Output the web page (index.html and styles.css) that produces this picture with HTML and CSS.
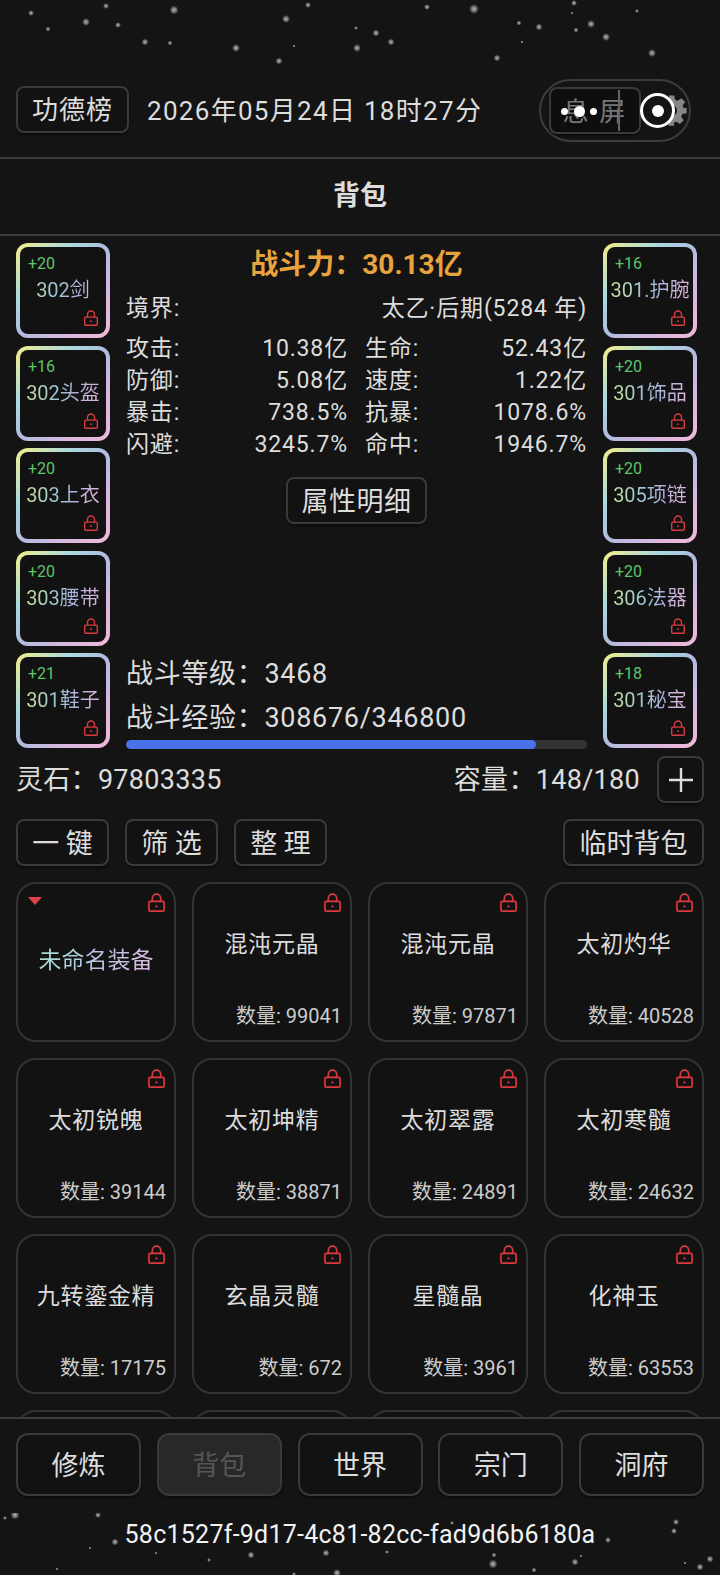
FILE: index.html
```html
<!DOCTYPE html>
<html lang="zh-CN">
<head>
  <meta charset="UTF-8" />
  <meta name="viewport" content="width=device-width, initial-scale=1.0" />
  <title>背包</title>
  <link rel="stylesheet" href="styles.css">
</head>
<body>
  <svg class="defs" aria-hidden="true">
    <defs>
      <radialGradient id="glow">
        <stop offset="0" stop-color="#fff" stop-opacity="0.95" />
        <stop offset="0.45" stop-color="#fff" stop-opacity="0.6" />
        <stop offset="1" stop-color="#fff" stop-opacity="0" />
      </radialGradient>
      <symbol id="lock" viewBox="0 0 16 18">
        <path d="M4 8V5a4 4 0 0 1 8 0v3" fill="none" stroke="currentColor" stroke-width="1.6" />
        <rect x="0.8" y="8" width="14.4" height="9.2" rx="1.2" fill="none" stroke="currentColor" stroke-width="1.6" />
        <circle cx="8" cy="12.6" r="1.1" fill="currentColor" />
      </symbol>
    </defs>
  </svg>

  <div class="page">
    <svg class="stars" viewBox="0 0 720 1575" aria-hidden="true">
      <g fill="url(#glow)">
        <circle cx="31" cy="13" r="3" /><circle cx="86" cy="22" r="4" /><circle cx="106" cy="6" r="3" />
        <circle cx="118" cy="25" r="3" /><circle cx="48" cy="29" r="2.5" /><circle cx="174" cy="10" r="4.5" />
        <circle cx="286" cy="19" r="4" /><circle cx="308" cy="5" r="3" /><circle cx="145" cy="42" r="3.5" />
        <circle cx="170" cy="43" r="2.5" /><circle cx="236" cy="48" r="4" /><circle cx="279" cy="61" r="3.5" />
        <circle cx="294" cy="46" r="1.5" /><circle cx="356" cy="28" r="2" /><circle cx="376" cy="33" r="3.5" />
        <circle cx="391" cy="42" r="3.5" /><circle cx="357" cy="48" r="4" /><circle cx="427" cy="7" r="3" />
        <circle cx="474" cy="9" r="5" /><circle cx="497" cy="58" r="3.5" /><circle cx="519" cy="23" r="2.5" />
        <circle cx="522" cy="42" r="1.5" /><circle cx="539" cy="27" r="3.5" /><circle cx="574" cy="3" r="3" />
        <circle cx="572" cy="13" r="1.5" /><circle cx="576" cy="30" r="2.5" /><circle cx="591" cy="24" r="4" />
        <circle cx="606" cy="37" r="4" /><circle cx="637" cy="11" r="2" /><circle cx="652" cy="53" r="4" />
        <circle cx="15" cy="1515" r="4.5" /><circle cx="5" cy="1518" r="2" /><circle cx="98" cy="1515" r="3" />
        <circle cx="115" cy="1542" r="3.5" /><circle cx="90" cy="1548" r="1.5" /><circle cx="156" cy="1553" r="1.5" />
        <circle cx="209" cy="1560" r="2" /><circle cx="251" cy="1555" r="3.5" /><circle cx="326" cy="1553" r="3.5" />
        <circle cx="387" cy="1552" r="2" /><circle cx="494" cy="1555" r="2.5" /><circle cx="493" cy="1564" r="4.5" />
        <circle cx="575" cy="1562" r="3.5" /><circle cx="581" cy="1556" r="1.5" /><circle cx="608" cy="1540" r="3" />
        <circle cx="676" cy="1522" r="3" /><circle cx="674" cy="1531" r="3" /><circle cx="534" cy="1570" r="2.5" />
        <circle cx="337" cy="1573" r="4" /><circle cx="294" cy="1574" r="2" /><circle cx="710" cy="1559" r="3.5" />
        <circle cx="700" cy="1567" r="3.5" /><circle cx="685" cy="1563" r="1.5" /><circle cx="57" cy="1569" r="1.5" />
        <circle cx="452" cy="1523" r="2" />
      </g>
    </svg>

    <header class="topbar">
      <button class="btn rank-btn">功德榜</button>
      <div class="date">2026年05月24日 18时27分</div>
      <div class="screen-toggle">
        <button class="btn sleep-btn">息 屏</button>
        <span class="sleep-line"></span>
        <span class="sleep-dots"><i></i><b></b><i></i></span>
        <svg class="gear" viewBox="0 0 24 24" aria-hidden="true">
          <path d="M10 1h4l.6 3.1 1.9.8 2.6-1.8 2.8 2.8-1.8 2.6.8 1.9L23 10v4l-3.1.6-.8 1.9 1.8 2.6-2.8 2.8-2.6-1.8-1.9.8L14 23h-4l-.6-3.1-1.9-.8-2.6 1.8-2.8-2.8 1.8-2.6-.8-1.9L1 14v-4l3.1-.6.8-1.9-1.8-2.6 2.8-2.8 2.6 1.8 1.9-.8zM12 8a4 4 0 1 0 0 8 4 4 0 0 0 0-8z" fill-rule="evenodd" />
        </svg>
        <span class="ring"><span></span></span>
      </div>
    </header>

    <h1 class="title">背包</h1>

    <section class="equip">
      <div class="slots">
        <div class="slot"><span class="plus">+20</span><span class="slot-name rainbow">302剑</span><svg class="slot-lock"><use href="#lock" /></svg></div>
        <div class="slot"><span class="plus">+16</span><span class="slot-name rainbow">302头盔</span><svg class="slot-lock"><use href="#lock" /></svg></div>
        <div class="slot"><span class="plus">+20</span><span class="slot-name rainbow">303上衣</span><svg class="slot-lock"><use href="#lock" /></svg></div>
        <div class="slot"><span class="plus">+20</span><span class="slot-name rainbow">303腰带</span><svg class="slot-lock"><use href="#lock" /></svg></div>
        <div class="slot"><span class="plus">+21</span><span class="slot-name rainbow">301鞋子</span><svg class="slot-lock"><use href="#lock" /></svg></div>
      </div>

      <div class="info">
        <div class="power">战斗力：30.13亿</div>
        <div class="stat realm"><span>境界:</span><span>太乙·后期(5284 年)</span></div>
        <div class="stats">
          <div class="stat"><span>攻击:</span><span>10.38亿</span></div>
          <div class="stat"><span>生命:</span><span>52.43亿</span></div>
          <div class="stat"><span>防御:</span><span>5.08亿</span></div>
          <div class="stat"><span>速度:</span><span>1.22亿</span></div>
          <div class="stat"><span>暴击:</span><span>738.5%</span></div>
          <div class="stat"><span>抗暴:</span><span>1078.6%</span></div>
          <div class="stat"><span>闪避:</span><span>3245.7%</span></div>
          <div class="stat"><span>命中:</span><span>1946.7%</span></div>
        </div>
        <button class="btn detail-btn">属性明细</button>
        <div class="level">
          <div>战斗等级：3468</div>
          <div>战斗经验：308676/346800</div>
          <div class="bar"><div class="bar-fill"></div></div>
        </div>
      </div>

      <div class="slots">
        <div class="slot"><span class="plus">+16</span><span class="slot-name rainbow">301.护腕</span><svg class="slot-lock"><use href="#lock" /></svg></div>
        <div class="slot"><span class="plus">+20</span><span class="slot-name rainbow">301饰品</span><svg class="slot-lock"><use href="#lock" /></svg></div>
        <div class="slot"><span class="plus">+20</span><span class="slot-name rainbow">305项链</span><svg class="slot-lock"><use href="#lock" /></svg></div>
        <div class="slot"><span class="plus">+20</span><span class="slot-name rainbow">306法器</span><svg class="slot-lock"><use href="#lock" /></svg></div>
        <div class="slot"><span class="plus">+18</span><span class="slot-name rainbow">301秘宝</span><svg class="slot-lock"><use href="#lock" /></svg></div>
      </div>
    </section>

    <div class="money">
      <div class="money-text">灵石：97803335</div>
      <div class="capacity">
        <span class="money-text">容量：148/180</span>
        <button class="btn add-btn">
          <svg viewBox="0 0 26 26" aria-hidden="true"><path d="M13 1v24M1 13h24" stroke="currentColor" stroke-width="2.4" /></svg>
        </button>
      </div>
    </div>

    <div class="tools">
      <button class="btn tool-btn">一 键</button>
      <button class="btn tool-btn">筛 选</button>
      <button class="btn tool-btn">整 理</button>
      <button class="btn temp-btn">临时背包</button>
    </div>

    <div class="grid-wrap">
      <div class="grid">
        <div class="card"><span class="mark"></span><svg class="card-lock"><use href="#lock" /></svg><div class="card-name unnamed rainbow">未命名装备</div></div>
        <div class="card"><svg class="card-lock"><use href="#lock" /></svg><div class="card-name">混沌元晶</div><div class="count">数量: 99041</div></div>
        <div class="card"><svg class="card-lock"><use href="#lock" /></svg><div class="card-name">混沌元晶</div><div class="count">数量: 97871</div></div>
        <div class="card"><svg class="card-lock"><use href="#lock" /></svg><div class="card-name">太初灼华</div><div class="count">数量: 40528</div></div>
        <div class="card"><svg class="card-lock"><use href="#lock" /></svg><div class="card-name">太初锐魄</div><div class="count">数量: 39144</div></div>
        <div class="card"><svg class="card-lock"><use href="#lock" /></svg><div class="card-name">太初坤精</div><div class="count">数量: 38871</div></div>
        <div class="card"><svg class="card-lock"><use href="#lock" /></svg><div class="card-name">太初翠露</div><div class="count">数量: 24891</div></div>
        <div class="card"><svg class="card-lock"><use href="#lock" /></svg><div class="card-name">太初寒髓</div><div class="count">数量: 24632</div></div>
        <div class="card"><svg class="card-lock"><use href="#lock" /></svg><div class="card-name">九转鎏金精</div><div class="count">数量: 17175</div></div>
        <div class="card"><svg class="card-lock"><use href="#lock" /></svg><div class="card-name">玄晶灵髓</div><div class="count">数量: 672</div></div>
        <div class="card"><svg class="card-lock"><use href="#lock" /></svg><div class="card-name">星髓晶</div><div class="count">数量: 3961</div></div>
        <div class="card"><svg class="card-lock"><use href="#lock" /></svg><div class="card-name">化神玉</div><div class="count">数量: 63553</div></div>
        <div class="card"></div>
        <div class="card"></div>
        <div class="card"></div>
        <div class="card"></div>
      </div>
    </div>

    <nav class="nav">
      <button class="btn nav-btn">修炼</button>
      <button class="btn nav-btn current">背包</button>
      <button class="btn nav-btn">世界</button>
      <button class="btn nav-btn">宗门</button>
      <button class="btn nav-btn">洞府</button>
    </nav>

    <footer class="uuid">58c1527f-9d17-4c81-82cc-fad9d6b6180a</footer>
  </div>
</body>
</html>
```

FILE: styles.css
```css
* { box-sizing: border-box; margin: 0; padding: 0; }
body { font-family: "Roboto", "Noto Sans CJK SC", sans-serif; background: #141414; color: #ddd; }
.defs { position: absolute; width: 0; height: 0; }
.page { position: relative; width: 720px; height: 1575px; overflow: hidden; display: flex; flex-direction: column; background: #141414; }
.stars { position: absolute; left: 0; top: 0; width: 720px; height: 1575px; opacity: 0.72; }

.btn { font-family: inherit; color: #ddd; background: #121212; border: 2px solid #3a3a3a; border-radius: 8px; padding-bottom: 3px; box-shadow: 0 2px 2px rgba(0,0,0,0.4); }

.topbar { position: relative; display: flex; align-items: center; height: 80px; margin-top: 79px; padding-left: 16px; padding-bottom: 18px; border-bottom: 2px solid #3c3c3c; }
.rank-btn { width: 113px; height: 47px; font-size: 26px; letter-spacing: 1px; }
.date { margin-left: 18px; padding-bottom: 2px; font-size: 26px; letter-spacing: 1.3px; white-space: nowrap; }
.screen-toggle { position: absolute; left: 539px; top: 0; width: 152px; height: 63px; border: 2px solid #3c3c3c; border-radius: 32px; }
.sleep-btn { position: absolute; left: 8px; top: 6px; width: 92px; height: 47px; font-size: 26px; letter-spacing: 2px; color: #777; background: #0e0e0e; }
.sleep-line { position: absolute; left: 77px; top: 9px; width: 2px; height: 41px; background: #666; }
.sleep-dots { position: absolute; left: 20px; top: 20px; width: 36px; height: 20px; display: flex; align-items: center; justify-content: space-between; }
.sleep-dots i { width: 7px; height: 7px; border-radius: 50%; background: #fff; }
.sleep-dots b { width: 11px; height: 11px; border-radius: 50%; background: #fff; }
.gear { position: absolute; left: 114px; top: 13px; width: 33px; height: 33px; fill: #868686; }
.ring { position: absolute; left: 99px; top: 12px; width: 35px; height: 35px; border: 3px solid #fff; border-radius: 50%; background: #141414; display: flex; align-items: center; justify-content: center; }
.ring span { width: 12px; height: 12px; border-radius: 50%; background: #fff; }

.title { position: relative; height: 77px; line-height: 74px; text-align: center; font-size: 27px; font-weight: 700; color: #ddd; border-bottom: 2px solid #3c3c3c; }

.equip { position: relative; display: flex; padding: 7px 23px 0 16px; height: 514px; }
.slots { width: 94px; display: flex; flex-direction: column; gap: 7.5px; }
.slot { position: relative; height: 95px; border: 4px solid transparent; border-radius: 12px; background: linear-gradient(#121212, #121212) padding-box, linear-gradient(135deg, #f6ee86 0%, #a9d9df 30%, #b0bce0 50%, #d8b8e0 75%, #f2b8d8 100%) border-box; padding: 7px 0 0 8px; }
.plus { display: block; font-size: 16px; line-height: 20px; color: #5dc46a; }
.slot-name { position: absolute; left: 0; right: 0; top: 30px; text-align: center; font-size: 20px; line-height: 26px; white-space: nowrap; }
.rainbow { background-image: linear-gradient(90deg, #c6e0a0 10%, #9cc8d4 40%, #b0b0dc 65%, #dcb4d8 90%); -webkit-background-clip: text; background-clip: text; color: transparent; }
.slot-lock { position: absolute; right: 8px; bottom: 8px; width: 14px; height: 16px; color: #d83a3f; }

.info { flex: 1; padding: 0 16px; display: flex; flex-direction: column; position: relative; }
.power { height: 44px; line-height: 44px; text-align: center; font-size: 28px; font-weight: 700; color: #e8a33d; }
.stat { display: flex; justify-content: space-between; font-size: 23px; letter-spacing: 0.85px; line-height: 32px; white-space: nowrap; }
.realm { margin-top: 6px; }
.stats { margin-top: 8px; display: grid; grid-template-columns: 222px 222px; justify-content: space-between; }
.detail-btn { align-self: center; width: 141px; height: 47px; margin-top: 16px; font-size: 27px; letter-spacing: 0.5px; }
.level { margin-top: auto; padding-bottom: 1px; font-size: 27px; letter-spacing: 0.7px; line-height: 44px; white-space: nowrap; }
.bar { height: 9px; border-radius: 5px; background: #333; overflow: hidden; }
.bar-fill { width: 89%; height: 100%; border-radius: 5px; background: #4a72e8; }

.money { position: relative; display: flex; justify-content: space-between; align-items: center; height: 47px; padding: 0 16px; margin-top: 6px; font-size: 27px; letter-spacing: 0.3px; }
.money-text { padding-bottom: 5px; }
.capacity { display: flex; align-items: center; gap: 17px; }
.add-btn { width: 47px; height: 47px; padding: 0; display: flex; align-items: center; justify-content: center; color: #ddd; }
.add-btn svg { width: 26px; height: 26px; }

.tools { position: relative; display: flex; gap: 16px; padding: 0 16px; margin-top: 16px; }
.tool-btn { width: 93px; height: 47px; font-size: 27px; }
.temp-btn { margin-left: auto; width: 141px; height: 47px; font-size: 27px; }

.grid-wrap { position: relative; flex: 1; margin-top: 16px; padding: 0 16px; overflow: hidden; }
.grid { display: grid; grid-template-columns: repeat(4, 160px); grid-auto-rows: 160px; gap: 16px; }
.card { position: relative; border: 2px solid #333; border-radius: 20px; background: #121212; }
.card-name { position: absolute; left: 0; right: 0; top: 44px; text-align: center; font-size: 23px; letter-spacing: 0.7px; line-height: 34px; color: #ddd; white-space: nowrap; }
.card-name.unnamed { top: 60px; color: transparent; background-image: linear-gradient(90deg, #a8e0d8 15%, #b4c4e0 50%, #dcb8e0 85%); letter-spacing: 0; }
.count { position: absolute; right: 8px; bottom: 9px; font-size: 20px; line-height: 30px; color: #ccc; white-space: nowrap; }
.card-lock { position: absolute; right: 9px; top: 9px; width: 17px; height: 19px; color: #d83a3f; }
.mark { position: absolute; left: 10px; top: 13px; width: 0; height: 0; border-left: 7px solid transparent; border-right: 7px solid transparent; border-top: 8px solid #e04046; }

.nav { position: relative; display: flex; justify-content: space-between; padding: 14px 16px 0; height: 96px; border-top: 2px solid #3c3c3c; background: #141414; }
.nav-btn { width: 125px; height: 63px; font-size: 27px; border-radius: 12px; }
.nav-btn.current { background: #282828; color: #555; }

.uuid { position: relative; height: 55px; margin-top: 7px; text-align: center; font-size: 25px; letter-spacing: 0.25px; line-height: 30px; color: #f2f2f2; }
```
